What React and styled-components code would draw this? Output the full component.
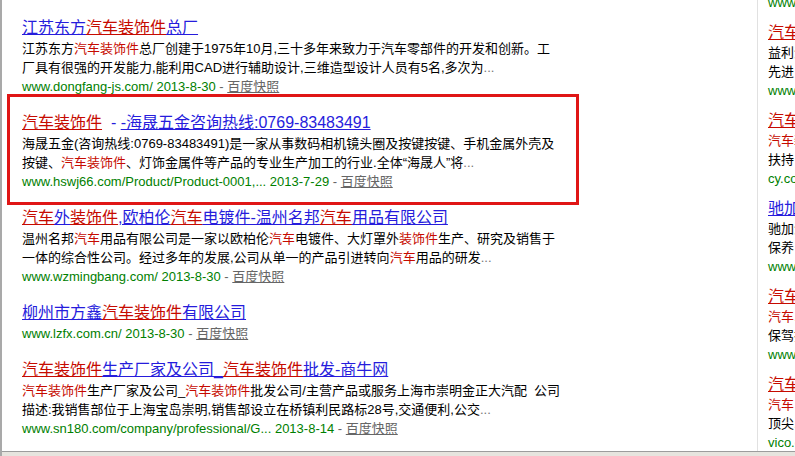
import React from 'react';
import styled, { createGlobalStyle } from 'styled-components';

const GlobalStyle = createGlobalStyle`
  html, body {
    margin: 0;
    padding: 0;
    background: #fff;
  }
  body {
    font-family: "Liberation Sans", "Noto Sans CJK SC", sans-serif;
  }
`;

const results = [
    {
        title: <>江苏东方<em>汽车装饰件</em>总厂</>,
        lines: [
            <>江苏东方<em>汽车装饰件</em>总厂创建于1975年10月,三十多年来致力于汽车零部件的开发和创新。工</>,
            <>厂具有很强的开发能力,能利用CAD进行辅助设计,三维造型设计人员有5名,多次为<i>...</i></>,
        ],
        url: 'www.dongfang-js.com/',
        date: '2013-8-30',
    },
    {
        highlight: true,
        title: <><em>汽车装饰件</em><span className="plain">&nbsp;&nbsp;-&nbsp;</span>-海晟五金咨询热线:0769-83483491</>,
        lines: [
            <>海晟五金(咨询热线:0769-83483491)是一家从事数码相机镜头圈及按键按键、手机金属外壳及</>,
            <>按键、<em>汽车装饰件</em>、灯饰金属件等产品的专业生产加工的行业.全体“海晟人”将<i>...</i></>,
        ],
        url: 'www.hswj66.com/Product/Product-0001,...',
        date: '2013-7-29',
    },
    {
        title: <><em>汽车</em>外<em>装饰件</em>,欧柏伦<em>汽车</em>电镀件-温州名邦<em>汽车</em>用品有限公司</>,
        lines: [
            <>温州名邦<em>汽车</em>用品有限公司是一家以欧柏伦<em>汽车</em>电镀件、大灯罩外<em>装饰件</em>生产、研究及销售于</>,
            <>一体的综合性公司。经过多年的发展,公司从单一的产品引进转向<em>汽车</em>用品的研发<i>...</i></>,
        ],
        url: 'www.wzmingbang.com/',
        date: '2013-8-30',
    },
    {
        title: <>柳州市方鑫<em>汽车装饰件</em>有限公司</>,
        lines: [],
        url: 'www.lzfx.com.cn/',
        date: '2013-8-30',
    },
    {
        title: <><em>汽车装饰件</em>生产厂家及公司_<em>汽车装饰件</em>批发-商牛网</>,
        lines: [
            <><em>汽车装饰件</em>生产厂家及公司_<em>汽车装饰件</em>批发公司/主营产品或服务上海市崇明金正大汽配&nbsp;&nbsp;公司</>,
            <>描述:我销售部位于上海宝岛崇明,销售部设立在桥镇利民路标28号,交通便利,公交<i>...</i></>,
        ],
        url: 'www.sn180.com/company/professional/G...',
        date: '2013-8-14',
    },
];

const ads = [
    {
        title: <><em>汽车装饰件</em>批发 益利厂家直销</>,
        lines: [<>益利<em>汽车</em>用品专业生产各类装饰件</>, <>先进&nbsp;设备,品质保证,欢迎来电</>],
        url: 'www.yili-auto.com',
    },
    {
        title: <><em>汽车装饰件</em>,创业好项目</>,
        lines: [<><em>汽车装饰件</em>加盟,总部全程</>, <>扶持&nbsp;开店无忧,投资小回报高</>],
        url: 'cy.com.cn',
    },
    {
        title: <>驰加汽车服务中心</>,
        lines: [<>驰加<em>汽车</em>服务,专业轮胎</>, <>保养&nbsp;一站式服务,全国连锁</>],
        url: 'www.tyreplus.com.cn',
    },
    {
        title: <><em>汽车</em>用品网上商城</>,
        lines: [<><em>汽车</em>.装饰件一应俱全</>, <>保驾护航,正品保障,货到付款</>],
        url: 'www.chepin.com',
    },
    {
        title: <><em>汽车</em>贴膜 威固官网</>,
        lines: [<><em>汽车</em>&nbsp;隔热膜专家</>, <>顶尖.品质,美国原装进口</>],
        url: 'vico.com.cn',
    },
];

const App = () => {
    return <Frame>
        <GlobalStyle />
        <Viewport>
            <MainColumn>
                {results.map((r, i) => {
                    const block = <Result key={i} {...r} />;
                    return r.highlight ? <HighlightBox key={i}>{block}</HighlightBox> : block;
                })}
            </MainColumn>
            <Sidebar>
                <AdUrl $clipped>www.car-parts.cn</AdUrl>
                {ads.map((ad, i) => (
                    <Ad key={i}>
                        <AdTitle href="#">{ad.title}</AdTitle>
                        {ad.lines.map((l, j) => <AdText key={j}>{l}</AdText>)}
                        <AdUrl>{ad.url}</AdUrl>
                    </Ad>
                ))}
            </Sidebar>
        </Viewport>
        <BottomEdge />
    </Frame>;
};

const Result = ({ title, lines, url, date }) => (
    <ResultBlock>
        <Title href="#">{title}</Title>
        {lines.map((l, i) => <Snippet key={i}>{l}</Snippet>)}
        <UrlLine>
            {url} {date}<span className="sep"> - </span><a href="#">百度快照</a>
        </UrlLine>
    </ResultBlock>
);

const Frame = styled.div`
  width: 795px;
  height: 456px;
  box-sizing: border-box;
  border-left: 2px solid #a9a9a9;
  display: flex;
  flex-direction: column;
  overflow: hidden;
`;

const Viewport = styled.div`
  flex: 1;
  min-height: 0;
  display: flex;
  overflow: hidden;
`;

const MainColumn = styled.div`
  flex: none;
  width: 755px;
  box-sizing: border-box;
  padding: 17px 0 0 20px;
  display: flex;
  flex-direction: column;
  align-items: flex-start;
`;

const ResultBlock = styled.div`
  margin-bottom: 16px;
  white-space: nowrap;
`;

const HighlightBox = styled.div`
  box-sizing: border-box;
  width: 572px;
  margin: -18px 0 2px -15px;
  padding: 15px 0 11px 12px;
  border: 3px solid #e01616;

  & > ${ResultBlock} {
    margin-bottom: 0;
  }
`;

const Title = styled.a`
  display: block;
  font-size: 16px;
  line-height: 22px;
  color: #261cdc;
  text-decoration: underline;
  width: fit-content;

  em {
    font-style: normal;
    color: #c60a00;
    text-decoration: underline;
  }
  .plain {
    display: inline-block;
    text-decoration: none;
  }
`;

const Snippet = styled.div`
  font-size: 13px;
  line-height: 19px;
  color: #000;

  em {
    font-style: normal;
    color: #c60a00;
  }
  i {
    font-style: normal;
    color: #777;
  }
`;

const UrlLine = styled.div`
  font-size: 13px;
  line-height: 19px;
  color: #008000;

  .sep {
    color: #666;
  }
  a {
    color: #666;
    text-decoration: underline;
  }
`;

const Sidebar = styled.div`
  flex: none;
  width: 220px;
  border-left: 1px solid #e1e1e1;
  padding-left: 10px;
  white-space: nowrap;
`;

const Ad = styled.div`
  margin-bottom: 11px;
`;

const AdTitle = styled.a`
  display: block;
  font-size: 16px;
  line-height: 20px;
  color: #261cdc;
  text-decoration: underline;

  em {
    font-style: normal;
    color: #c60a00;
    text-decoration: underline;
  }
`;

const AdText = styled.div`
  font-size: 13px;
  line-height: 19px;
  color: #000;

  em {
    font-style: normal;
    color: #c60a00;
  }
`;

const AdUrl = styled.div`
  font-size: 13px;
  line-height: 19px;
  color: #008000;
  margin-top: ${p => (p.$clipped ? '-7px' : '0')};
  margin-bottom: ${p => (p.$clipped ? '11px' : '0')};
`;

const BottomEdge = styled.div`
  flex: none;
  height: 5px;
  box-sizing: border-box;
  border-top: 1px solid #9c9c9c;
  background: #e6e4de;
`;

export default App;
